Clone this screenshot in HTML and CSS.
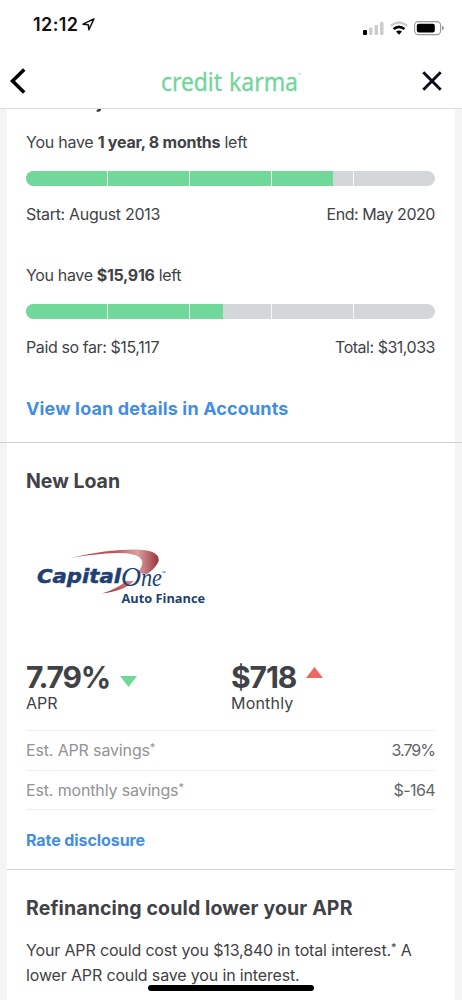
FILE: index.html
```html
<!DOCTYPE html>
<html lang="en">
<head>
<meta charset="utf-8">
<title>Credit Karma</title>
<link rel="stylesheet" href="styles.css">
</head>
<body>
<div class="screen">
  <header class="header">
    <div class="status">
      <div class="clock"><span>12:12</span>
        <svg class="location" width="13" height="13" viewBox="0 0 13 13"><path d="M1 6.2 11.9.9 6.9 11.8 6.3 6.8Z" fill="none" stroke="#111" stroke-width="1.5" stroke-linejoin="round"/></svg>
      </div>
      <svg class="indicators" width="84" height="16" viewBox="0 0 84 16">
        <rect x="1" y="10" width="4" height="5" rx="1" fill="#000"/>
        <rect x="7" y="7.5" width="3.5" height="7.5" rx="1" fill="#ccc"/>
        <rect x="12.5" y="5" width="3.5" height="10" rx="1" fill="#ccc"/>
        <rect x="18" y="2" width="3.5" height="13" rx="1" fill="#ccc"/>
        <path d="M28.8 5.9Q37 -.8 45.2 5.9" fill="none" stroke="#ccc" stroke-width="2.5"/>
        <path d="M31.6 9.1Q37 4.7 42.4 9.1" fill="none" stroke="#000" stroke-width="2.6"/>
        <path d="M34 11.6Q37 9.3 40 11.6L37 14.8Z" fill="#000"/>
        <rect x="52.6" y="1.6" width="26" height="13" rx="3.8" fill="none" stroke="#999" stroke-width="1.1"/>
        <rect x="54.8" y="3.8" width="18" height="8.7" rx="2" fill="#000"/>
        <path d="M80 5.8Q82 6.4 82 8.1T80 10.4Z" fill="#999"/>
      </svg>
    </div>
    <nav class="nav">
      <svg width="16" height="26" viewBox="0 0 16 26"><path d="M14.2 1.5 2.5 13 14.2 24.5" fill="none" stroke="#000" stroke-width="3.6"/></svg>
      <svg class="brand" width="142" height="40" viewBox="0 0 142 40">
        <text class="brand-word" x="1" y="29.5" textLength="61" lengthAdjust="spacingAndGlyphs">credit</text>
        <text class="brand-word" x="69" y="29.5" textLength="69" lengthAdjust="spacingAndGlyphs">karma</text>
        <text class="brand-mark" x="138" y="15">™</text>
      </svg>
      <svg width="20" height="20" viewBox="0 0 20 20"><path d="M1.3 1.3 18.7 18.7M18.7 1.3 1.3 18.7" stroke="#0b0b16" stroke-width="2.9"/></svg>
    </nav>
  </header>

  <main class="content">
    <section class="card current">
      <svg class="descender" width="6" height="3" viewBox="0 0 6 3"><path d="M2 0H5.3Q4.7 2.6 3 2.7H.6V1Q1.8 1 2 0Z" fill="#3b3c40"/></svg>
      <p class="text remaining">You have <b>1 year, 8 months</b> left</p>
      <div class="bar"><i class="fill" style="width:75.1%"></i><i class="ticks"></i></div>
      <div class="text row"><span class="start">Start: August 2013</span><span class="end">End: May 2020</span></div>
      <p class="text remaining second">You have <b>$15,916</b> left</p>
      <div class="bar"><i class="fill" style="width:48.1%"></i><i class="ticks"></i></div>
      <div class="text row"><span class="paid">Paid so far: $15,117</span><span class="total">Total: $31,033</span></div>
      <a class="link accounts">View loan details in Accounts</a>
    </section>

    <section class="card offer">
      <h2 class="heading new-loan">New Loan</h2>
      <svg class="logo" width="200" height="90" viewBox="0 0 200 90">
        <defs>
          <linearGradient id="swoosh" x1="0" y1="0" x2="1" y2="0">
            <stop offset="0" stop-color="#c23a40"/><stop offset=".5" stop-color="#b9575d"/><stop offset=".76" stop-color="#dba0a3"/><stop offset="1" stop-color="#98333b"/>
          </linearGradient>
          <linearGradient id="tail" x1="0" y1="1" x2="1" y2="0">
            <stop offset="0" stop-color="#ad2933"/><stop offset="1" stop-color="#d58b8e"/>
          </linearGradient>
        </defs>
        <path d="M50 28Q90 19 117 19.6Q140 20.5 138.7 31Q136 38 127 44L117 43Q125 34 121 29Q115 21.5 86 23.5Q65 25.2 50 28Z" fill="url(#swoosh)"/>
        <path d="M82 63.5Q97 59 106 51L114 51Q104 61 82 63.5Z" fill="url(#tail)"/>
        <text class="capital" x="17" y="52.5" textLength="84" lengthAdjust="spacingAndGlyphs">Capital</text>
        <text class="one" x="101" y="56" textLength="20" lengthAdjust="spacingAndGlyphs">O</text>
        <text class="one small" x="121" y="56" textLength="21" lengthAdjust="spacingAndGlyphs">ne</text>
        <text class="trademark" x="142" y="45">™</text>
        <text class="auto" x="101.5" y="72.5" textLength="83.5" lengthAdjust="spacingAndGlyphs">Auto Finance</text>
      </svg>
      <div class="rates">
        <div class="rate">
          <div class="figure"><span class="apr-value">7.79%</span><svg class="down" width="17" height="11"><path d="M0 0H17L8.5 11Z" fill="#6fd894"/></svg></div>
          <div class="text apr">APR</div>
        </div>
        <div class="rate">
          <div class="figure"><span class="monthly-value">$718</span><svg class="up" width="17" height="11"><path d="M0 11H17L8.5 0Z" fill="#ec6864"/></svg></div>
          <div class="text monthly">Monthly</div>
        </div>
      </div>
      <dl class="savings">
        <div class="saving text"><dt>Est. APR savings<span class="star">*</span></dt><dd class="pct">3.79%</dd></div>
        <div class="saving text"><dt>Est. monthly savings<span class="star">*</span></dt><dd class="amount">$-164</dd></div>
      </dl>
      <a class="link disclosure">Rate disclosure</a>
    </section>

    <section class="card refinance">
      <h2 class="heading refi">Refinancing could lower your APR</h2>
      <p class="text advice">Your APR could cost you $13,840 in total interest.<span class="star">*</span> A<br>lower APR could save you in interest.</p>
    </section>
  </main>
  <div class="home-indicator"></div>
</div>
</body>
</html>
```
FILE: styles.css
```css
* { box-sizing: border-box; }
body { margin: 0; background: #fff; }
p, h2, dl, dd { margin: 0; }
.screen {
  position: relative;
  width: 462px;
  height: 1000px;
  overflow: hidden;
  background: #f5f5f6;
  font-family: Inter, "Liberation Sans", sans-serif;
  color: #414246;
}
.header { height: 109px; background: #fff; border-bottom: 1px solid #dcdcdd; }
.status { height: 60px; padding: 13px 16px 0 33px; display: flex; justify-content: space-between; }
.clock { display: flex; gap: 4px; color: #111; font-size: 18px; font-weight: 600; line-height: 24px; letter-spacing: .4px; }
.location { margin-top: 5px; }
.indicators { margin: 7px 0 0; }
.nav { height: 42px; padding: 0 20px 0 10px; display: flex; align-items: center; justify-content: space-between; }
.brand { margin-left: 14px; overflow: visible; }
.brand-word { font: 25px "Noto Sans", sans-serif; fill: #71d69a; stroke: #71d69a; stroke-width: .3px; }
.brand-mark { font: 4px "Noto Sans", sans-serif; fill: #71d69a; }

.card { margin: 0 7px; padding: 0 20px 0 19px; background: #fff; }
.text { font-size: 16px; line-height: 24px; font-weight: 400; white-space: nowrap; }
.current { height: 333px; }
.descender { display: block; margin-left: 70px; height: 3px; }
.remaining { padding-top: 18px; height: 59px; letter-spacing: -.25px; }
.remaining.second { padding-top: 36px; height: 77px; letter-spacing: -.34px; }
.bar { position: relative; height: 15px; border-radius: 8px; overflow: hidden; background: #d4d7da; }
.fill { display: block; height: 100%; background: #70d899; }
.ticks {
  position: absolute;
  inset: 0 70px 0 0;
  background: repeating-linear-gradient(90deg, transparent 0 81px, #f4f8f6 81px 82px);
}
.row { display: flex; justify-content: space-between; padding-top: 16px; height: 41px; }
.start { letter-spacing: -.3px; }
.end { letter-spacing: -.45px; }
.paid { letter-spacing: -.4px; }
.total { letter-spacing: -.48px; }
.link { display: block; color: #438ee4; font-weight: 700; white-space: nowrap; }
.accounts { margin-top: 36px; font-size: 18px; line-height: 26px; letter-spacing: .15px; }
.heading { font-size: 19.5px; line-height: 28px; font-weight: 700; white-space: nowrap; }

.offer { height: 427px; border-top: 1px solid transparent; position: relative; }
.offer::before { content: ""; position: absolute; top: -1px; left: -7px; width: 462px; height: 1px; background: #cfcfd1; }
.new-loan { margin-top: 24px; }
.logo { display: block; margin: 35px 0 0 -6px; }
.capital { font: italic 700 20px "DejaVu Sans", sans-serif; fill: #203f72; stroke: #203f72; stroke-width: .5px; }
.one { font: italic 27px "Liberation Serif", serif; fill: #203f72; }
.one.small { font-size: 25px; }
.trademark { font: 5px "Open Sans", sans-serif; fill: #203f72; }
.auto { font: 700 13px "Open Sans", sans-serif; fill: #203f72; }
.rates { margin-top: 39px; display: grid; grid-template-columns: 205px 205px; height: 71px; }
.figure { display: flex; height: 36px; font-size: 30px; line-height: 36px; font-weight: 700; margin-bottom: -4px; }
.apr-value { letter-spacing: -1.2px; }
.monthly-value { letter-spacing: -1.1px; }
.down { margin: 17px 0 0 10px; }
.up { margin: 8px 0 0 10px; }
.monthly { letter-spacing: .2px; }
.savings { border-top: 1px solid #efeff0; }
.saving { display: flex; justify-content: space-between; height: 39.5px; line-height: 39px; border-bottom: 1px solid #efeff0; color: #929396; letter-spacing: -.15px; }
.saving dd { color: #626367; }
.pct { letter-spacing: -1px; }
.amount { letter-spacing: -.6px; }
.star { display: inline-block; font-size: 11px; line-height: 1; vertical-align: 5px; }
.disclosure { margin-top: 18px; font-size: 16px; line-height: 24px; letter-spacing: -.08px; }
.refinance { height: 131px; border-top: 1px solid #d3d3d5; }
.refi { padding-top: 24px; letter-spacing: .14px; }
.advice { padding-top: 16px; line-height: 25px; letter-spacing: -.15px; }
.home-indicator { position: absolute; left: 148px; top: 985px; width: 166px; height: 6px; border-radius: 3px; background: #000; }
```
